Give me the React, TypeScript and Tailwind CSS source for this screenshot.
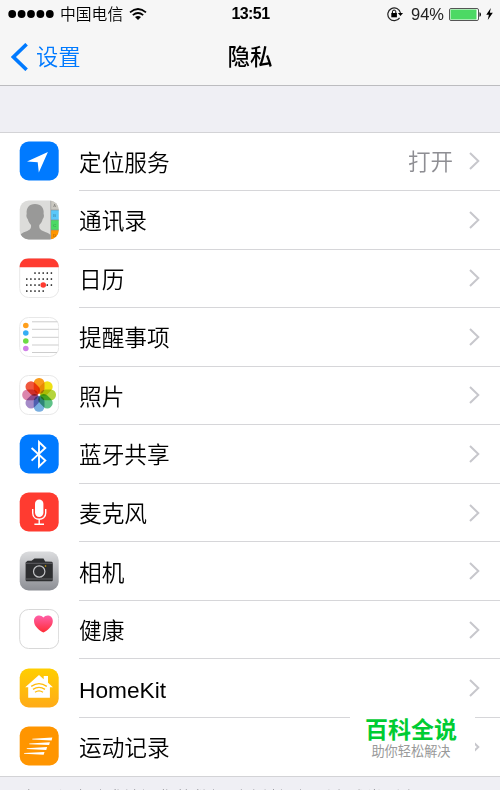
import type { ReactNode } from 'react'

const iconClass = 'block size-10 shrink-0'

function Tile({ fill, stroke, children }: { fill: string; stroke?: string; children?: ReactNode }) {
  return (
    <svg className={iconClass} viewBox="0 0 40 40">
      <rect x="0.7" y="0.5" width="39" height="39" rx="9" fill={fill} stroke={stroke} />
      {children}
    </svg>
  )
}

const LocationIcon = () => (
  <Tile fill="#007aff">
    <path d="M28.9 11 L8 20.4 L18.7 21.3 L19.8 31.6 Z" fill="#fff" />
  </Tile>
)

const contactTabs = [
  { y: 0, h: 10, fill: '#c9c7c0', letter: 'A' },
  { y: 10, h: 10, fill: '#5ac8fa', letter: 'B' },
  { y: 20, h: 10, fill: '#4cd964', letter: 'C' },
  { y: 30, h: 10, fill: '#ff9500', letter: 'D' },
]

const ContactsIcon = () => (
  <svg className={iconClass} viewBox="0 0 40 40">
    <defs>
      <clipPath id="contacts">
        <rect x="0.7" y="0.5" width="39" height="39" rx="9" />
      </clipPath>
    </defs>
    <g clipPath="url(#contacts)">
      <rect width="40" height="40" fill="#dcdcda" />
      <path
        d="M16 4 C10 4 7 8 7.7 14 C7 15 7.5 18 8.7 19 C9.5 22 10.5 23.5 12 25 C12.5 28.5 11 30 7 31.5 C3 33 1 34 0 38 V40 H31.5 V35 C30 33 27 32.5 24 31 C21 29.5 20 28.5 20.3 25 C22 23.5 23 22 23.7 19 C25 18 25.3 15 24.6 14 C25.5 8 22 4 16 4 Z"
        fill="#999998"
      />
      {contactTabs.map((t) => (
        <g key={t.letter}>
          <rect x="32" y={t.y} width="8" height={t.h} fill={t.fill} />
          <text x="34.3" y={t.y + 7} fontSize="4" fill="#000" opacity="0.4" fontFamily="Liberation Sans">
            {t.letter}
          </text>
        </g>
      ))}
      <path d="M31.7 0 V40 M32 10 H40 M32 20 H40 M32 30 H40" stroke="#8b8b89" strokeWidth="0.6" />
    </g>
  </svg>
)

const calendarDots = [
  { y: 15, from: 4, to: 9 },
  { y: 21, from: 2, to: 9 },
  { y: 27, from: 2, to: 9 },
  { y: 33, from: 2, to: 7 },
]

const CalendarIcon = () => (
  <Tile fill="#fff" stroke="#e8e8e8">
    <path d="M0.6 9.3 C0.6 3.8 4 0.4 9.5 0.4 H30.7 C36.2 0.4 39.8 3.8 39.8 9.3 Z" fill="#ff3b30" />
    {calendarDots.map((row) =>
      Array.from({ length: row.to - row.from }, (_, i) => (
        <circle key={`${row.y}-${i}`} cx={(row.from + i - 2) * 4.1 + 7.8} cy={row.y} r="0.85" fill="#000" />
      )),
    )}
    <circle cx="24.2" cy="27" r="2.8" fill="#ff3b30" />
  </Tile>
)

const reminders = [
  { y: 8.5, fill: '#ff9f1c' },
  { y: 16, fill: '#34aef5' },
  { y: 24, fill: '#6cdc45' },
  { y: 31.5, fill: '#d080e8' },
]

const RemindersIcon = () => (
  <Tile fill="#fff" stroke="#e8e8e8">
    <path d="M13 4.8 H38.5 M13 12.3 H39.5 M13 20.3 H39.5 M13 28 H39.5 M13 35.5 H38" stroke="#c7c7c7" strokeWidth="0.9" />
    {reminders.map((r) => (
      <circle key={r.y} cx="6.8" cy={r.y} r="2.8" fill={r.fill} />
    ))}
  </Tile>
)

const petals = ['#f99b1c', '#f0e114', '#b5d53c', '#5fc288', '#78aee0', '#a58bc8', '#dc85ad', '#f0583e']

const PhotosIcon = () => (
  <Tile fill="#fff" stroke="#e8e8e8">
    <g transform="translate(20.1 19.8)">
      {petals.map((fill, i) => (
        <rect
          key={fill}
          x="-5.4"
          y="-16.9"
          width="10.8"
          height="15.8"
          rx="5.2"
          fill={fill}
          transform={`rotate(${i * 45})`}
          className="mix-blend-multiply"
        />
      ))}
    </g>
  </Tile>
)

const BluetoothIcon = () => (
  <Tile fill="#007aff">
    <path d="M12.6 14 L26.3 26.6 L20 32.5 V8 L26.3 14 L12.6 26.6" fill="none" stroke="#fff" strokeWidth="1.9" />
  </Tile>
)

const MicIcon = () => (
  <Tile fill="#ff3b30">
    <rect x="16" y="7.5" width="8.4" height="17.5" rx="4.2" fill="#fff" />
    <path d="M13.7 17 V21 C13.7 29.3 26.7 29.3 26.7 21 V17 M20.2 27.3 V32 M15.4 32.2 H25" fill="none" stroke="#fff" strokeWidth="1.4" />
  </Tile>
)

const CameraIcon = () => (
  <svg className={iconClass} viewBox="0 0 40 40">
    <defs>
      <linearGradient id="camera" x1="0" y1="0" x2="0" y2="1">
        <stop stopColor="#dbdcde" />
        <stop offset="1" stopColor="#8c8e94" />
      </linearGradient>
    </defs>
    <rect x="0.7" y="0.5" width="39" height="39" rx="9" fill="url(#camera)" />
    <path
      d="M6.6 11.5 L8.6 9.8 H12.5 L14.2 8.6 L15.5 7.4 H24.5 L26.2 10.4 L32.8 10.8 L33.8 11.7 V29 C33.8 30 33.3 30.3 32.3 30.3 H8.3 C7.1 30.3 6.6 30 6.6 29 Z"
      fill="#2d2e30"
    />
    <path d="M6.6 12.3 H33.8 M6.6 28 H33.8" stroke="#75767a" strokeWidth="0.7" />
    <circle cx="20.2" cy="20.5" r="7" fill="#2b2c2e" />
    <circle cx="20.2" cy="20.5" r="5.7" fill="#303134" stroke="#c3c4c6" strokeWidth="1.2" />
    <circle cx="26.5" cy="15" r="0.8" fill="#e9b400" />
  </svg>
)

const HealthIcon = () => (
  <Tile fill="#fff" stroke="#d8d8d8">
    <defs>
      <linearGradient id="heart" x1="0" y1="0" x2="0" y2="1">
        <stop stopColor="#ff5fa8" />
        <stop offset="1" stopColor="#ff2d36" />
      </linearGradient>
    </defs>
    <path
      d="M24.4 23.5 C20.5 21.5 15 17.6 15 12 C15 6.2 21.7 5 24.4 8.6 C27.1 5 33.8 6.2 33.8 12 C33.8 17.6 28.3 21.5 24.4 23.5 Z"
      fill="url(#heart)"
    />
  </Tile>
)

const HomeKitIcon = () => (
  <svg className={iconClass} viewBox="0 0 40 40">
    <defs>
      <linearGradient id="home" x1="0" y1="0" x2="0" y2="1">
        <stop stopColor="#ffce00" />
        <stop offset="1" stopColor="#ffab18" />
      </linearGradient>
    </defs>
    <rect x="0.7" y="0.5" width="39" height="39" rx="9" fill="url(#home)" />
    <path d="M20 7 L24.7 11.2 V8 H29 V14.8 L33.9 19.2 H30.9 V29.7 H9.2 V19.2 H6.2 Z" fill="#fff" />
    <g fill="none" stroke="#ffbc0c" strokeWidth="1.3">
      <path d="M12.2 18.4 Q20 12.8 27.8 18.4" />
      <path d="M14 21.4 Q20 17.2 26 21.4" />
      <path d="M16 24.3 Q20 21.5 24 24.3" />
    </g>
  </svg>
)

const MotionIcon = () => (
  <Tile fill="#ff9500">
    <path
      d="M13.3 12.8 L33.3 11.6 L32.6 14.4 L13.3 13.5 Z M10.3 17.5 L30.9 16.3 L30.1 19.1 L10.3 18.2 Z M7.8 22.3 L28.1 21.1 L27.3 23.9 L7.8 23 Z M5.1 27.1 L25.5 25.9 L24.7 28.7 L5.1 27.8 Z"
      fill="#fff"
    />
  </Tile>
)

const rows = [
  { icon: LocationIcon, label: '定位服务', value: '打开' },
  { icon: ContactsIcon, label: '通讯录' },
  { icon: CalendarIcon, label: '日历' },
  { icon: RemindersIcon, label: '提醒事项' },
  { icon: PhotosIcon, label: '照片' },
  { icon: BluetoothIcon, label: '蓝牙共享' },
  { icon: MicIcon, label: '麦克风' },
  { icon: CameraIcon, label: '相机' },
  { icon: HealthIcon, label: '健康' },
  { icon: HomeKitIcon, label: 'HomeKit' },
  { icon: MotionIcon, label: '运动记录' },
]

function StatusBar() {
  return (
    <div className="grid h-7 grid-cols-3 items-center pr-[7px] pl-2">
      <div className="flex items-center">
        <svg className="h-2 w-[46px]" viewBox="0 0 46 8">
          {[0, 1, 2, 3, 4].map((i) => (
            <circle key={i} cx={4.2 + i * 9.4} cy="4" r="3.9" />
          ))}
        </svg>
        <span className="ml-1.5 pt-0.5 text-[15.8px] font-[350]">中国电信</span>
        <svg className="ml-1.5 h-3 w-[18px]" viewBox="0 0 18 12">
          <path d="M1 4.4 Q9 -2.4 17 4.4 M3.8 7.2 Q9 2.8 14.2 7.2" fill="none" stroke="#000" strokeWidth="1.7" />
          <path d="M6 9.1 Q9 6.7 12 9.1 L9 12 Z" />
        </svg>
      </div>
      <div className="text-center text-[16px] font-bold tracking-[-0.6px]">13:51</div>
      <div className="flex items-center justify-end">
        <svg className="h-4 w-4 shrink-0" viewBox="0 0 16 16">
          <path d="M12.6 11.8 A6.4 6.4 0 1 1 13.5 7" fill="none" stroke="#222" strokeWidth="1.2" />
          <path d="M10.9 7.1 H16 L13.5 10 Z" />
          <rect x="4.3" y="7" width="5.6" height="4.3" />
          <path d="M5.4 7.5 V5.8 A1.7 1.7 0 0 1 8.8 5.8 V7.5" fill="none" stroke="#000" strokeWidth="1" />
        </svg>
        <span className="ml-2 text-[16.5px] text-[#222]">94%</span>
        <svg className="ml-[5px] h-[13px] w-8 shrink-0" viewBox="0 0 32 13">
          <rect x="0.5" y="0.5" width="29" height="12" rx="1.5" fill="#fff" stroke="#555" />
          <rect x="1.5" y="1.5" width="26" height="10" fill="#4cd964" />
          <path d="M30.5 4.3 C32.4 4.6 32.4 8.4 30.5 8.7 Z" />
        </svg>
        <svg className="ml-[5px] h-3 w-[7px] shrink-0" viewBox="0 0 8 12" preserveAspectRatio="none">
          <path d="M5.5 0 L0.3 6.8 H3.3 L2 12 L7.8 4.8 H4.4 Z" />
        </svg>
      </div>
    </div>
  )
}

export default function App() {
  return (
    <div className="relative h-[790px] w-[500px] overflow-hidden bg-[#efeff4] font-['Liberation_Sans','Noto_Sans_CJK_SC',sans-serif] text-black">
      <header className="h-[86px] border-b border-[#bcbcbf] bg-[#f6f6f6]">
        <StatusBar />
        <div className="grid h-[57px] grid-cols-3 items-center">
          <div className="flex items-center pl-[11px] text-[22.3px] font-[350] text-[#007aff]">
            <svg className="h-7 w-[17px]" viewBox="0 0 17 28">
              <path d="M15.6 1.2 L2.4 14 L15.6 26.8" fill="none" stroke="currentColor" strokeWidth="3.6" />
            </svg>
            <span className="ml-2 pt-0.5">设置</span>
          </div>
          <h1 className="pt-0.5 text-center text-[22.5px] font-medium">隐私</h1>
        </div>
      </header>

      <main className="mt-[45.5px] border-y border-[#d3d3d6] bg-white">
        {rows.map(({ icon: Icon, label, value }, i) => (
          <div key={label} className="flex h-[58.55px] pl-[19px] last:h-[58px]">
            <div className="flex items-center pb-[1.5px]">
              <Icon />
            </div>
            <div
              className={`ml-5 flex h-full flex-1 items-center pr-5 ${i < rows.length - 1 ? 'border-b border-[#d6d6d9]' : ''}`}
            >
              <span className="pt-[3px] text-[22.7px] font-[350]">{label}</span>
              <span className="mr-4 ml-auto pt-[3px] text-[22.5px] font-[350] text-[#8e8e93]">{value}</span>
              <svg className="h-[18px] w-[11px]" viewBox="0 0 11 18">
                <path d="M1 1 L9.3 9 L1 17" fill="none" stroke="#c7c7cc" strokeWidth="2" />
              </svg>
            </div>
          </div>
        ))}
      </main>
      <p className="mt-[9px] pl-5 text-[17.3px] leading-6 font-light whitespace-nowrap text-[#6d6d72]">
        应用程序请求访问您的数据时会被添加到上述类别中。
      </p>

      {/* Watermark over the last row */}
      <div className="absolute top-[709px] left-[350px] flex h-[64px] w-[125px] flex-col items-center bg-white pr-[3px]">
        <span className="mt-[7px] text-[23px] leading-7 font-bold text-[#00cc33]">百科全说</span>
        <span className="text-[13.2px] leading-4 text-[#999]">助你轻松解决</span>
      </div>
    </div>
  )
}
